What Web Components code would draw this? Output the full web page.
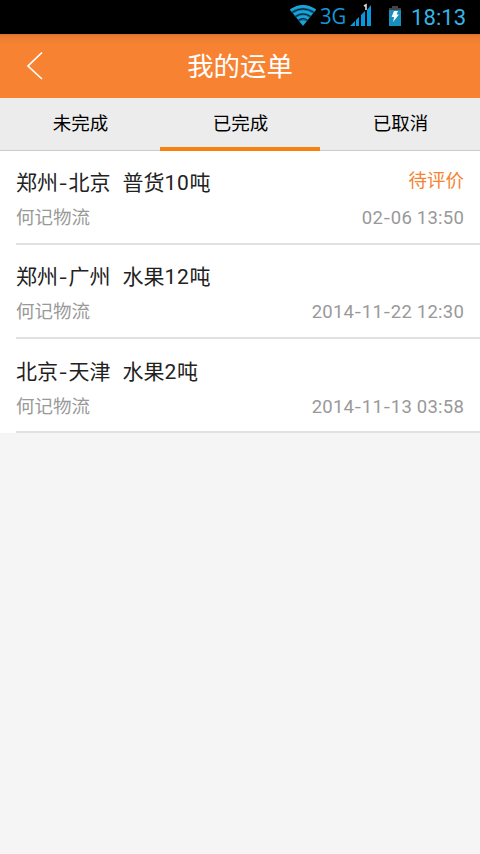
<!DOCTYPE html>
<html lang="zh-CN">
<head>
<meta charset="utf-8">
<title>我的运单</title>
<style>
body{margin:0;width:480px;height:854px;overflow:hidden;background:#f5f5f5;font-family:Roboto,"Noto Sans CJK SC",sans-serif}
</style>
</head>
<body>
<waybill-app></waybill-app>
<script>
function define(name, html, setup) {
  const template = document.createElement('template');
  template.innerHTML = html;
  customElements.define(name, class extends HTMLElement {
    constructor() {
      super();
      this.attachShadow({mode: 'open'}).append(template.content.cloneNode(true));
    }
    connectedCallback() { if (setup) setup(this, this.shadowRoot); }
  });
}

define('status-bar', `<style>
:host{display:flex;height:34px;background:#000;color:#33b5e5;box-sizing:border-box;justify-content:flex-end;align-items:flex-start;padding-right:14px}
svg{display:block;flex:none}
.net{font:400 22px/31px "Open Sans",sans-serif;width:26px;margin-left:3px;white-space:nowrap;color:#1497d8}
.net span{display:inline-block;transform:scaleX(.92);transform-origin:0 50%}
.sig{margin-left:4px}.bat{margin-left:16px}
.time{font:400 22px/35px Roboto,sans-serif;letter-spacing:.1px;width:55px;margin-left:9px;white-space:nowrap}
</style>
<svg width="28" height="34" viewBox="0 0 28 34"><path d="M1 10Q14 1 27 10L14 26Z" fill="#0b6c94"/><g fill="none" stroke="#1aa4dc" stroke-width="2.6"><path d="M1.7 10.4Q14 2.4 26.3 10.4"/><path d="M5 14.4Q14 8.5 23 14.4"/><path d="M8.4 18.5Q14 14.5 19.6 18.5"/></g><path d="M10.6 21.5Q14 19.5 17.4 21.5L14 25.5Z" fill="#1aa4dc"/><path d="M3.4 12.3Q14 5.5 24.6 12.3M6.8 16.4Q14 11.5 21.2 16.4M9.6 20.2Q14 17 18.4 20.2" fill="none" stroke="#04202d" stroke-width="1"/></svg>
<div class="net"><span>3G</span></div>
<svg class="sig" width="22" height="34" viewBox="0 0 22 34"><path d="M0 26L5 21V26ZM6 20L9 17V26H6ZM11 15L15 11V26H11ZM17 10L21 5V26H17Z" fill="#0799df"/><path d="M14 6L16 4.8V10" fill="none" stroke="#ddd" stroke-width="1.6"/></svg>
<svg class="bat" width="14" height="34" viewBox="0 0 14 34"><path d="M4 6H10V8H13V13H1V8H4Z" fill="#444"/><path d="M1 10H13V26H1Z" fill="#168fbd"/><path d="M6 11H10L8.5 14.5H11L5 22L6.2 17H3.6Z" fill="#fff"/></svg>
<div class="time">18:13</div>`);

define('title-bar', `<style>
:host{display:grid;grid-template-columns:80px 1fr 80px;height:64px;align-items:center;background:linear-gradient(#d96f2b 0,#e87c30 2px,#f07f31 5px,#f78332 12px);color:#fff}
svg{display:block;margin-left:26px}
h1{font-size:26.4px;line-height:38px;font-weight:400;margin:0;padding-top:2px;text-align:center;white-space:nowrap}
</style>
<svg width="18" height="30" viewBox="0 0 18 30"><path d="M16 1.5L2 15L16 28" fill="none" stroke="#fff" stroke-width="1.7"/></svg>
<h1><slot></slot></h1>`);

define('tab-item', `<style>
:host{display:flex;flex:1;box-sizing:border-box;height:53px;justify-content:center;padding:12px 0 0 1px;font-size:18.5px;line-height:28px;color:#000;border-bottom:1px solid #ccc;background:#ececec}
:host([active]){border-bottom:4px solid #f7820f;background:linear-gradient(#ececec,#ececec) padding-box}
</style><slot></slot>`);

define('tab-strip', `<style>:host{display:flex;height:53px;background:#ececec}</style><slot></slot>`);

define('waybill-row', `<style>
:host{display:block;background:#fff;padding-left:16px}
.box{height:94.2px;box-sizing:border-box;border-bottom:2px solid #e1e1e1;padding:17px 16px 0 0}
:host(:last-of-type) .box{height:93.6px;padding-top:17.6px}
.line{display:flex;justify-content:space-between;white-space:nowrap}
.route{font-size:21px;line-height:30px;color:#222;display:flex}
.load{margin-left:12px}
i{font-style:normal;display:inline-block}
.dash{width:10.5px;text-align:center;transform:scaleX(1.25)}
.num{letter-spacing:.7px}
.state{font-size:18.5px;line-height:26px;color:#f78332}
.sub{font-size:18.5px;line-height:26px;color:#999;padding-top:7px}
.date{letter-spacing:.22px}
.date i{letter-spacing:0;width:7.7px;text-align:center;transform:scaleX(1.2)}
</style>
<div class="box">
<div class="line"><div class="route"><span class="from"></span><i class="dash">-</i><span class="to"></span><span class="load"><span class="goods"></span><span class="num"></span>吨</span></div><div class="state"></div></div>
<div class="line sub"><span><slot></slot></span><span class="date"></span></div>
</div>`, (host, root) => {
  for (const key of ['from', 'to', 'goods', 'num', 'state'])
    root.querySelector('.' + key).textContent = host.getAttribute(key) || '';
  root.querySelector('.date').innerHTML = host.getAttribute('date').replace(/-/g, '<i>-</i>');
});

define('waybill-app', `<style>:host{display:block;width:480px}</style>
<status-bar></status-bar>
<title-bar>我的运单</title-bar>
<tab-strip><tab-item>未完成</tab-item><tab-item active>已完成</tab-item><tab-item>已取消</tab-item></tab-strip>
<waybill-row from="郑州" to="北京" goods="普货" num="10" state="待评价" date="02-06 13:50">何记物流</waybill-row>
<waybill-row from="郑州" to="广州" goods="水果" num="12" date="2014-11-22 12:30">何记物流</waybill-row>
<waybill-row from="北京" to="天津" goods="水果" num="2" date="2014-11-13 03:58">何记物流</waybill-row>`);
</script>
</body>
</html>
